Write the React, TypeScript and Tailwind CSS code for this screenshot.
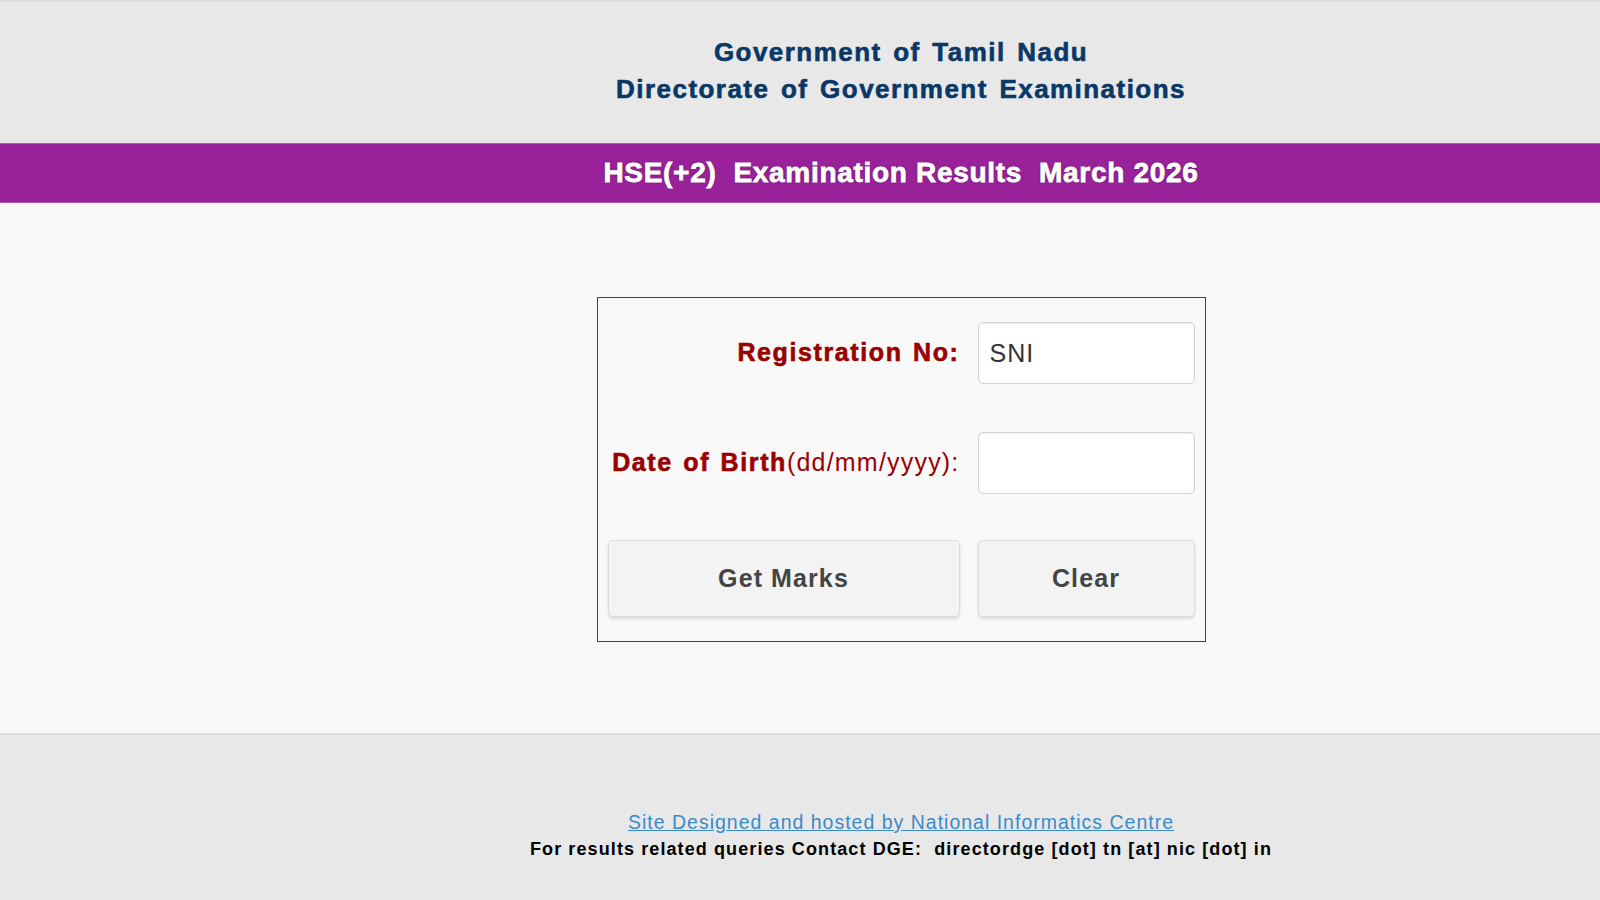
export default function App() {
  return (
    <div className="min-h-[900px] flex flex-col bg-[#e8e8e8] font-['Liberation_Sans',Arial,sans-serif]">
      <header className="h-[143px] border-t-2 border-[#dedede] pl-[202px] pt-[32px] text-center text-[#0a3866] text-[26px] font-bold leading-[37px] tracking-[1.45px] [word-spacing:3px] [-webkit-text-stroke:0.6px_#0a3866]">
        <div>Government of Tamil Nadu</div>
        <div>Directorate of Government Examinations</div>
      </header>

      <div className="h-[60px] bg-[#99219a] border-y border-[#b45ab5] pl-[202px] flex items-center justify-center">
        <h1 className="text-white text-[28px] font-bold tracking-[0.7px] whitespace-pre [-webkit-text-stroke:0.8px_white] [text-shadow:0_0_2px_#4a0f4a,0_0_1px_#4a0f4a]">
          {'HSE(+2)  Examination Results  March 2026'}
        </h1>
      </div>

      <main className="h-[530px] bg-[#f9f9f9] pl-[202px] pt-[94px] flex justify-center items-start">
        <div className="w-[609px] h-[345px] border border-[#7b2b2b] pt-[24px] pl-[10px] pr-[11px]">
          <div className="grid grid-cols-[352px_217px] gap-x-[18px]">
            <label className="h-[62px] flex items-center justify-end text-[#990000] text-[25px] font-bold tracking-[1.6px] [word-spacing:2px] [-webkit-text-stroke:0.6px_#990000]">
              Registration No:
            </label>
            <input
              defaultValue="SNI"
              className="h-[62px] w-[217px] rounded-[5px] border border-[#d4d4d4] bg-white px-[11px] text-[25px] tracking-[1px] text-[#333] shadow-[inset_0_1px_2px_rgba(0,0,0,0.08)] outline-none"
            />

            <label className="mt-[48px] h-[62px] flex items-center justify-end text-[#990000] text-[25px] [word-spacing:2px] whitespace-nowrap">
              <span className="font-bold tracking-[1.6px] [-webkit-text-stroke:0.6px_#990000]">Date of Birth</span>
              <span className="tracking-[1.2px]">(dd/mm/yyyy):</span>
            </label>
            <input className="mt-[48px] h-[62px] w-[217px] rounded-[5px] border border-[#d4d4d4] bg-white px-[11px] text-[25px] text-[#333] shadow-[inset_0_1px_2px_rgba(0,0,0,0.08)] outline-none" />

            <button className="mt-[46px] h-[77px] rounded-[5px] border border-[#dcdcdc] bg-[#f3f3f3] text-[25px] font-bold tracking-[1.1px] text-[#444] shadow-[0_2px_3px_rgba(0,0,0,0.12)]">
              Get Marks
            </button>
            <button className="mt-[46px] h-[77px] rounded-[5px] border border-[#dcdcdc] bg-[#f3f3f3] text-[25px] font-bold tracking-[1.1px] text-[#444] shadow-[0_2px_3px_rgba(0,0,0,0.12)]">
              Clear
            </button>
          </div>
        </div>
      </main>

      <footer className="flex-1 border-t-2 border-[#dedede] pl-[202px] pt-[74px] text-center">
        <a href="#" className="text-[19.5px] tracking-[1px] text-[#3b8ac9] underline leading-[27px]">
          Site Designed and hosted by National Informatics Centre
        </a>
        <p className="text-[18px] font-bold tracking-[1.1px] text-black leading-[27px] whitespace-pre">
          {'For results related queries Contact DGE:  directordge [dot] tn [at] nic [dot] in'}
        </p>
      </footer>
    </div>
  )
}
